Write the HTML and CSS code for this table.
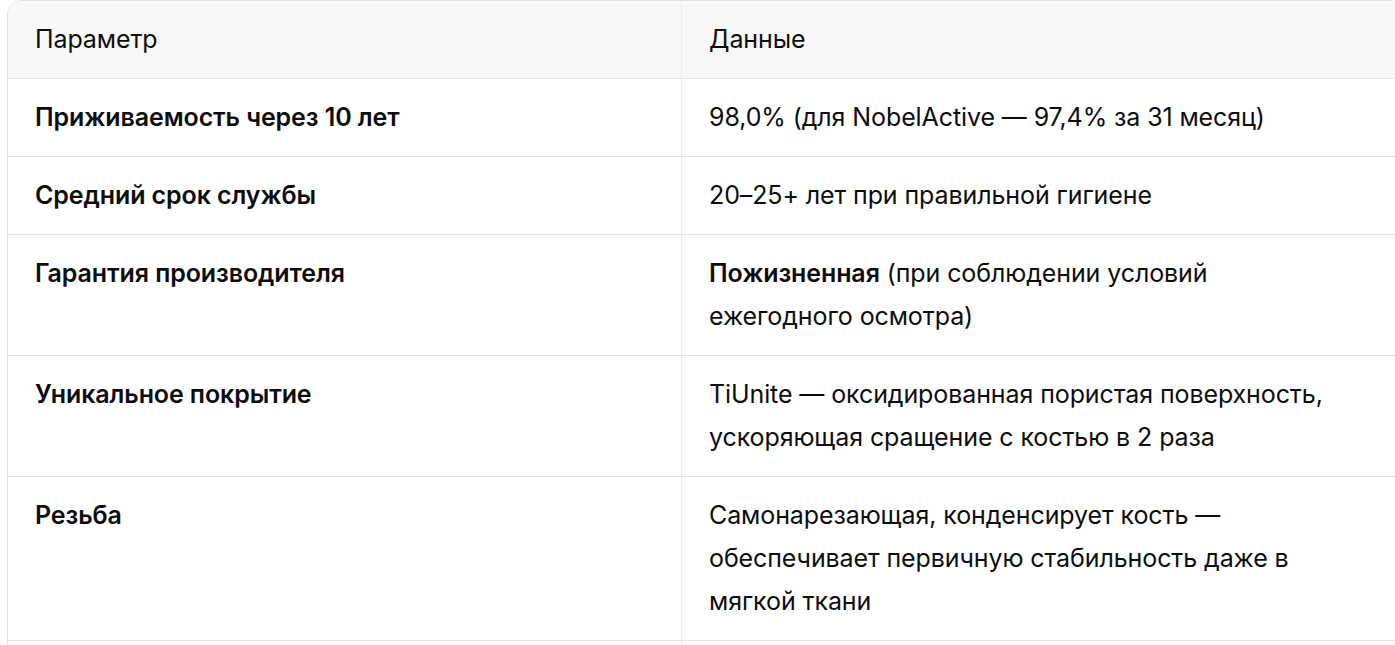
FILE: index.html
```html
<!DOCTYPE html>
<html lang="ru">
<head>
<meta charset="utf-8">
<link rel="stylesheet" href="styles.css">
</head>
<body>
<div class="table-wrap">
  <table class="spec">
    <thead>
      <tr><th class="c1">Параметр</th><th class="c2">Данные</th></tr>
    </thead>
    <tbody>
      <tr><td class="c1"><strong>Приживаемость через 10 лет</strong></td><td>98,0% (для NobelActive — 97,4% за 31 месяц)</td></tr>
      <tr><td class="c1"><strong>Средний срок службы</strong></td><td>20–25+ лет при правильной гигиене</td></tr>
      <tr><td class="c1"><strong>Гарантия производителя</strong></td><td><strong>Пожизненная</strong> (при соблюдении условий<br>ежегодного осмотра)</td></tr>
      <tr><td class="c1"><strong>Уникальное покрытие</strong></td><td>TiUnite — оксидированная пористая поверхность,<br>ускоряющая сращение с костью в 2 раза</td></tr>
      <tr><td class="c1"><strong>Резьба</strong></td><td>Самонарезающая, конденсирует кость —<br>обеспечивает первичную стабильность даже в<br>мягкой ткани</td></tr>
      <tr><td class="c1"><strong>&nbsp;</strong></td><td>&nbsp;</td></tr>
    </tbody>
  </table>
</div>
</body>
</html>
```
FILE: styles.css
```css
html, body {
  margin: 0;
  padding: 0;
  background: #ffffff;
  overflow: hidden;
}
body {
  font-family: Inter, "Noto Sans", "Liberation Sans", sans-serif;
  color: #0d0d0d;
  font-size: 25px;
  letter-spacing: -0.1px;
}
.table-wrap {
  margin: 0 0 0 7px;
  width: 1394px;
  border: 1px solid #e3e3e3;
  border-radius: 14px;
  overflow: hidden;
}
.spec {
  width: 100%;
  border-collapse: collapse;
  table-layout: fixed;
}
.spec th, .spec td {
  text-align: left;
  vertical-align: top;
  padding: 17px 27px;
  line-height: 43px;
  border-bottom: 1px solid #e3e3e3;
  font-weight: 400;
}
.spec th {
  background: #f9f8f8;
}
.spec .c1 {
  width: 619px;
  border-right: 1px solid #ececec;
}
.spec strong {
  font-weight: 600;
}
```
